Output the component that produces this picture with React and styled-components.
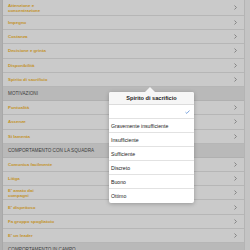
import React from "react";
import styled, { createGlobalStyle } from "styled-components";

const GlobalStyle = createGlobalStyle`
  html, body {
    margin: 0;
    padding: 0;
    background: #c0c0c0;
    overflow: hidden;
  }
  body {
    font-family: "Liberation Sans", Arial, sans-serif;
  }
`;

const Screen = styled.div`
  position: relative;
  width: 250px;
  height: 250px;
  overflow: hidden;
  display: flex;
  background: #c3c3c3;
`;

const EdgeStrip = styled.div`
  width: 3px;
  flex-shrink: 0;
  background: #b0b0b0;
  border-right: 1px solid #a8a8a8;
  box-sizing: border-box;
`;

const List = styled.div`
  width: 241px;
  flex-shrink: 0;
  display: flex;
  flex-direction: column;
`;

const Row = styled.div`
  height: ${(p) => (p.$tall ? "16px" : "14.2px")};
  flex-shrink: 0;
  box-sizing: border-box;
  border-bottom: 1px solid #b6b6b6;
  background: #cacaca;
  display: flex;
  align-items: center;
  padding: 0 5px 0 5px;
`;

const RowLabel = styled.span`
  flex: 1;
  color: #c39228;
  font-size: 4.4px;
  font-weight: bold;
  line-height: 5px;
`;

const Chevron = styled.svg`
  width: 3px;
  height: 5px;
  margin-right: 2px;
`;

const SectionHeader = styled.div`
  height: 14.2px;
  flex-shrink: 0;
  box-sizing: border-box;
  background: #b9b9b9;
  border-bottom: 1px solid #b0b0b0;
  display: flex;
  align-items: center;
  padding-left: 5px;
  color: #3c3c3c;
  font-size: 4.6px;
  letter-spacing: 0.05px;
`;

const RightGutter = styled.div`
  flex: 1;
  background: #c4c4c4;
  border-left: 1px solid #b4b4b4;
`;

const Popover = styled.div`
  position: absolute;
  left: 109px;
  top: 92px;
  width: 85px;
  background: #fff;
  border-radius: 2px;
  box-shadow: 0 1px 4px rgba(0, 0, 0, 0.25);
  display: flex;
  flex-direction: column;
  &::before {
    content: "";
    position: absolute;
    left: 36px;
    top: -5px;
    border-left: 5px solid transparent;
    border-right: 5px solid transparent;
    border-bottom: 5px solid #f6f6f6;
  }
`;

const PopTitle = styled.div`
  height: 12px;
  background: #f6f6f6;
  border-bottom: 1px solid #dcdcdc;
  border-radius: 2px 2px 0 0;
  display: flex;
  align-items: center;
  justify-content: center;
  font-size: 5.6px;
  font-weight: bold;
  color: #1a1a1a;
`;

const Option = styled.div`
  height: 14px;
  box-sizing: border-box;
  border-bottom: ${(p) => (p.$last ? "none" : "1px solid #e2e2e2")};
  display: flex;
  align-items: center;
  justify-content: space-between;
  padding: 0 4px 0 2px;
  font-size: 5.2px;
  color: #222;
`;

const Check = styled.svg`
  width: 5px;
  height: 4px;
`;

const items = [
  { type: "row", label: ["Attenzione e", "concentrazione"], tall: true },
  { type: "row", label: ["Impegno"] },
  { type: "row", label: ["Costanza"] },
  { type: "row", label: ["Decisione e grinta"] },
  { type: "row", label: ["Disponibilità"] },
  { type: "row", label: ["Spirito di sacrificio"] },
  { type: "header", label: "MOTIVAZIONI" },
  { type: "row", label: ["Puntualità"] },
  { type: "row", label: ["Assenze"] },
  { type: "row", label: ["Si lamenta"] },
  { type: "header", label: "COMPORTAMENTO CON LA SQUADRA" },
  { type: "row", label: ["Comunica facilmente"] },
  { type: "row", label: ["Litiga"] },
  { type: "row", label: ["E' amato dai", "compagni"] },
  { type: "row", label: ["E' dispettoso"] },
  { type: "row", label: ["Fa gruppo spogliatoio"] },
  { type: "row", label: ["E' un leader"] },
  { type: "header", label: "COMPORTAMENTO IN CAMPO" },
];

const options = [
  "",
  "Gravemente insufficiente",
  "Insufficiente",
  "Sufficiente",
  "Discreto",
  "Buono",
  "Ottimo",
];

const App = () => {
  return (
    <>
      <GlobalStyle />
      <Screen>
        <EdgeStrip />
        <List>
          {items.map((it, i) =>
            it.type === "header" ? (
              <SectionHeader key={i}>{it.label}</SectionHeader>
            ) : (
              <Row key={i} $tall={it.tall}>
                <RowLabel>
                  {it.label.map((l, j) => (
                    <div key={j}>{l}</div>
                  ))}
                </RowLabel>
                <Chevron viewBox="0 0 3 5">
                  <polyline
                    points="0.5,0.5 2.4,2.5 0.5,4.5"
                    fill="none"
                    stroke="#7a7a7a"
                    strokeWidth="0.9"
                  />
                </Chevron>
              </Row>
            )
          )}
        </List>
        <RightGutter />
        <Popover>
          <PopTitle>Spirito di sacrificio</PopTitle>
          {options.map((o, i) => (
            <Option key={i} $last={i === options.length - 1}>
              <span>{o}</span>
              {i === 0 && (
                <Check viewBox="0 0 5 4">
                  <polyline
                    points="0.5,2.2 1.8,3.4 4.5,0.5"
                    fill="none"
                    stroke="#5b8ed6"
                    strokeWidth="0.8"
                  />
                </Check>
              )}
            </Option>
          ))}
        </Popover>
      </Screen>
    </>
  );
};

export default App;
